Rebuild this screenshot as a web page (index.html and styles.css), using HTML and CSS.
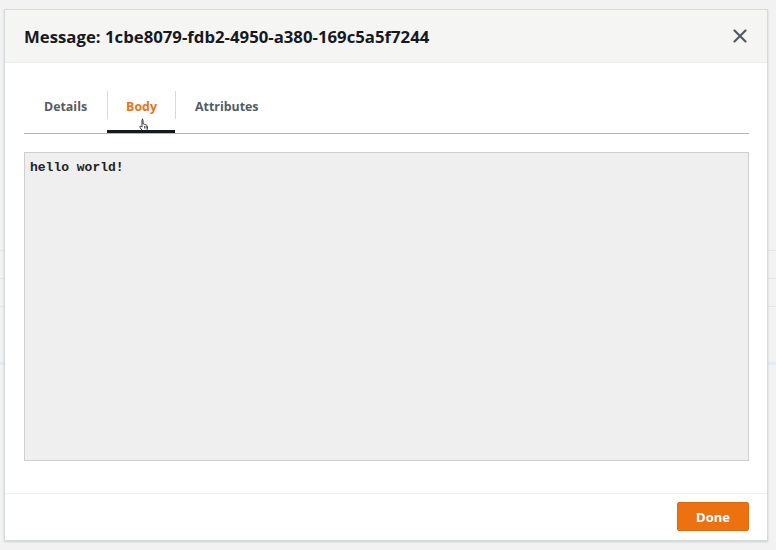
FILE: index.html
```html
<!DOCTYPE html>
<html>
<head>
<meta charset="utf-8">
<link rel="stylesheet" href="styles.css">
</head>
<body>
<div class="backdrop">
  <div class="bg-row"></div>
  <div class="bg-row"></div>
  <div class="bg-row"></div>
  <div class="bg-row accent"></div>
</div>
<div class="modal">
  <div class="modal-header">
    <h2 class="modal-title">Message: 1cbe8079-fdb2-4950-a380-169c5a5f7244</h2>
    <button class="close" aria-label="Close">
      <svg width="14" height="14" viewBox="0 0 14 14"><path d="M1.5 1.5 L12.5 12.5 M12.5 1.5 L1.5 12.5" stroke="#545b64" stroke-width="2.2" stroke-linecap="round" fill="none"/></svg>
    </button>
  </div>
  <div class="modal-body">
    <div class="tabs">
      <div class="tab">Details</div>
      <div class="tab active">Body
        <svg class="cursor" width="12" height="14" viewBox="0 0 12 14"><path d="M3.5 1.2c.6 0 1 .4 1 1V6l.3-.1c.5-.2 1 .1 1.1.5.4-.3 1-.1 1.2.3.4-.2 1 0 1.1.5l.6 2.5c.2 1-.1 2-.8 2.8l-.6.7H4.3L1.6 9.6c-.4-.4-.4-1 0-1.3.4-.3.9-.2 1.2.1l.7.7V2.2c0-.6.4-1 1-1z" fill="#fff" stroke="#222" stroke-width="0.9" transform="translate(-0.5,0)"/><path d="M5.5 8v2.5M7 8v2.5M8.4 8.3v2.2" stroke="#222" stroke-width="0.7"/></svg>
      </div>
      <div class="tab">Attributes</div>
    </div>
    <div class="body-box"><pre class="body-text">hello world!</pre></div>
  </div>
  <div class="modal-footer">
    <button class="done">Done</button>
  </div>
</div>
</body>
</html>
```
FILE: styles.css
```css
* { box-sizing: border-box; }
html, body { margin: 0; padding: 0; }
body {
  width: 776px;
  height: 550px;
  background: #f2f2f2;
  font-family: "Open Sans", "Noto Sans", Arial, sans-serif;
  position: relative;
  overflow: hidden;
}
.backdrop {
  position: absolute;
  left: 0; top: 0;
  width: 776px; height: 550px;
  display: flex;
  flex-direction: column;
  padding-top: 250px;
}
.bg-row {
  height: 28px;
  border-top: 1px solid #e6e6e6;
}
.bg-row.accent {
  margin-top: 28px;
  border-top: 3px solid #e3ebf3;
}
.modal {
  position: absolute;
  left: 4px;
  top: 9px;
  width: 764px;
  height: 532px;
  background: #fff;
  border: 1px solid #d5dbdb;
  box-shadow: 0 1px 2px rgba(0,0,0,0.15);
  display: flex;
  flex-direction: column;
}
.modal-header {
  height: 54px;
  background: #f5f5f4;
  border-bottom: 1px solid #eaeded;
  display: flex;
  align-items: center;
  justify-content: space-between;
  padding: 0 20px 0 19px;
}
.modal-title {
  margin: 0;
  font-size: 16.75px;
  font-weight: 700;
  color: #16191f;
}
.close {
  border: 0;
  background: none;
  padding: 0;
  width: 14px;
  height: 14px;
  display: flex;
  margin-top: -1px;
}
.modal-body {
  flex: 1;
  padding: 0 18px 32px 19px;
  display: flex;
  flex-direction: column;
}
.tabs {
  display: flex;
  align-items: flex-end;
  height: 71px;
  border-bottom: 1px solid #aab7b8;
}
.tab {
  position: relative;
  height: 51px;
  padding: 0 20px;
  display: flex;
  align-items: center;
  font-size: 12.4px;
  font-weight: 700;
  color: #545b64;
  padding-bottom: 3px;
}
.tab + .tab::before {
  content: "";
  position: absolute;
  left: 0;
  top: 9px;
  height: 28px;
  border-left: 1px solid #d5dbdb;
}
.tab.active {
  color: #ec7211;
  padding: 0 18px 3px 19px;
}
.tab.active::after {
  content: "";
  position: absolute;
  left: 0; right: 0; bottom: 0;
  height: 3px;
  background: #16191f;
}
.cursor {
  position: absolute;
  left: 32px;
  top: 36px;
}
.body-box {
  margin-top: 18px;
  height: 309px;
  background: #efefef;
  border: 1px solid #cfcfcf;
  padding: 7px 5px;
}
.body-text {
  margin: 0;
  font-family: "Liberation Mono", "DejaVu Sans Mono", monospace;
  font-size: 13px;
  font-weight: 700;
  color: #222;
}
.modal-footer {
  height: 47px;
  border-top: 1px solid #eef0f0;
  display: flex;
  justify-content: flex-end;
  align-items: flex-start;
  padding: 8px 18px 0 0;
}
.done {
  width: 72px;
  height: 29px;
  background: #ec7211;
  border: 1px solid #e06a0e;
  border-radius: 2px;
  color: #fff;
  font-family: "Open Sans", "Noto Sans", Arial, sans-serif;
  font-size: 13px;
  font-weight: 700;
  padding: 0;
}
```
